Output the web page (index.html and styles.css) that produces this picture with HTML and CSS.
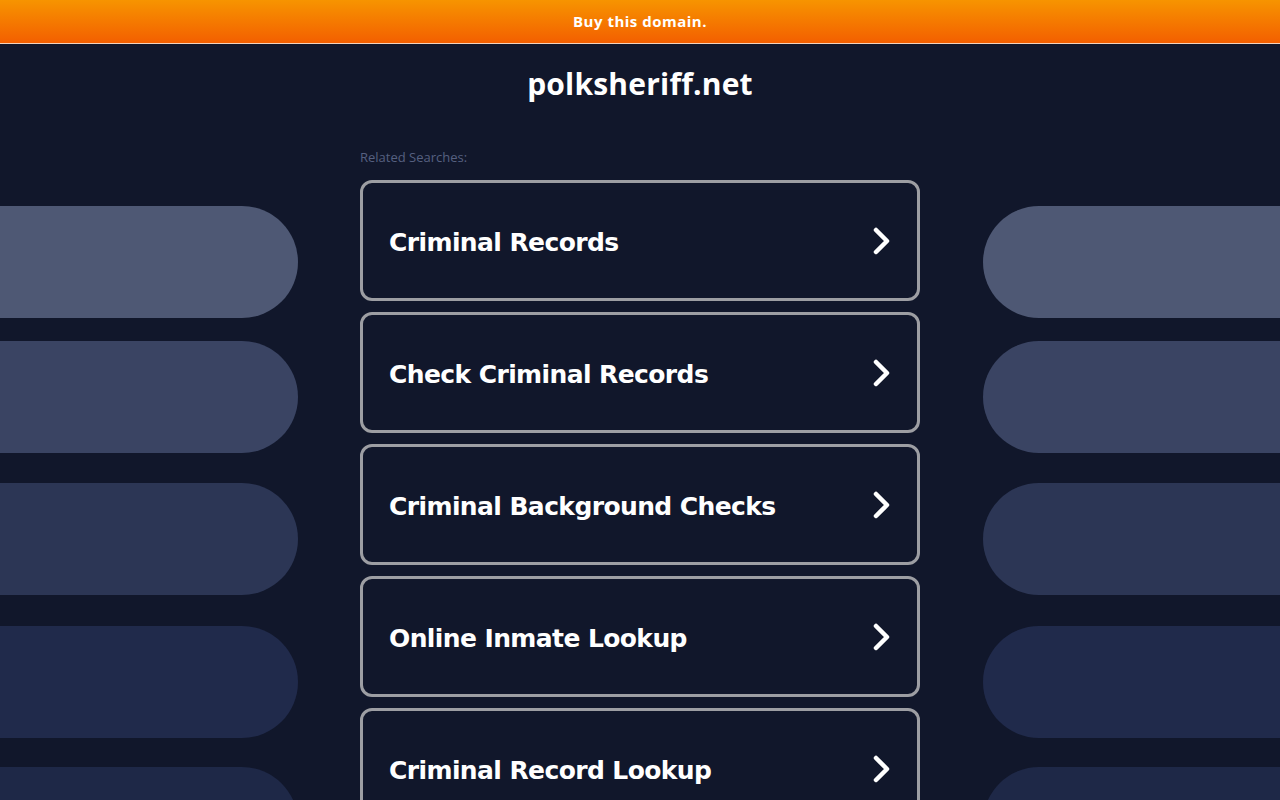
FILE: index.html
```html
<!DOCTYPE html>
<html lang="en">
<head>
<meta charset="utf-8">
<title>polksheriff.net</title>
<link rel="stylesheet" href="styles.css">
</head>
<body>
<div class="topbar"><a class="buy" href="#">Buy this domain.</a></div>
<h1 class="domain">polksheriff.net</h1>
<div class="layout">
  <div class="pills pills-left">
    <div class="pill p1"></div>
    <div class="pill p2"></div>
    <div class="pill p3"></div>
    <div class="pill p4"></div>
    <div class="pill p5"></div>
  </div>
  <main class="center">
    <div class="related">Related Searches:</div>
    <ul class="links">
      <li><a class="link" href="#"><span>Criminal Records</span><svg class="chev" viewBox="0 0 20 28" width="20" height="28"><polyline points="4,3 15,14 4,25" /></svg></a></li>
      <li><a class="link" href="#"><span>Check Criminal Records</span><svg class="chev" viewBox="0 0 20 28" width="20" height="28"><polyline points="4,3 15,14 4,25" /></svg></a></li>
      <li><a class="link" href="#"><span>Criminal Background Checks</span><svg class="chev" viewBox="0 0 20 28" width="20" height="28"><polyline points="4,3 15,14 4,25" /></svg></a></li>
      <li><a class="link" href="#"><span>Online Inmate Lookup</span><svg class="chev" viewBox="0 0 20 28" width="20" height="28"><polyline points="4,3 15,14 4,25" /></svg></a></li>
      <li><a class="link" href="#"><span>Criminal Record Lookup</span><svg class="chev" viewBox="0 0 20 28" width="20" height="28"><polyline points="4,3 15,14 4,25" /></svg></a></li>
    </ul>
  </main>
  <div class="pills pills-right">
    <div class="pill p1"></div>
    <div class="pill p2"></div>
    <div class="pill p3"></div>
    <div class="pill p4"></div>
    <div class="pill p5"></div>
  </div>
</div>
</body>
</html>
```

FILE: styles.css
```css
html, body {
  margin: 0;
  padding: 0;
  height: 800px;
  overflow: hidden;
  background: #11172b;
  font-family: "Open Sans", "Liberation Sans", sans-serif;
}

.topbar {
  height: 43px;
  border-bottom: 1px solid #f3d3bd;
  background: linear-gradient(to bottom, #f79400, #f35f00);
  display: flex;
  align-items: center;
  justify-content: center;
}

.buy {
  color: #fff;
  text-decoration: none;
  font-weight: 700;
  font-size: 15px;
  letter-spacing: 0.5px;
  margin-top: -2px;
}

.domain {
  margin: 0;
  padding-top: 21px;
  height: 53px;
  text-align: center;
  color: #fff;
  font-size: 30px;
  line-height: 38px;
  font-weight: 700;
  letter-spacing: 0.2px;
}

.layout {
  display: grid;
  grid-template-columns: 298px 560px 298px;
  justify-content: space-between;
  padding-top: 29px;
}

.pills {
  display: flex;
  flex-direction: column;
  padding-top: 59px;
}

.pill {
  height: 112px;
}

.pill + .pill { margin-top: 23px; }
.pill.p3 { margin-top: 30px; }
.pill.p4 { margin-top: 31px; }
.pill.p5 { margin-top: 29px; }

.pills-left .pill { border-radius: 0 56px 56px 0; }
.pills-right .pill { border-radius: 56px 0 0 56px; margin-left: 1px; }

.p1 { background: #4e5874; }
.p2 { background: #3a4463; }
.p3 { background: #2c3655; }
.p4 { background: #202a4b; }
.p5 { background: #1e2847; }

.related {
  color: #566080;
  font-size: 13px;
  line-height: 16px;
  height: 20px;
  padding-top: 2px;
  margin-bottom: 11px;
}

.links {
  list-style: none;
  margin: 0;
  padding: 0;
  display: flex;
  flex-direction: column;
  gap: 11px;
}

.link {
  box-sizing: border-box;
  height: 121px;
  display: flex;
  align-items: center;
  justify-content: space-between;
  padding: 3px 25px 0 26px;
  border: 3px solid #9d9ea3;
  border-radius: 12px;
  color: #fff;
  text-decoration: none;
  font-family: "DejaVu Sans", Verdana, sans-serif;
  font-weight: 700;
  font-size: 25px;
  letter-spacing: -0.6px;
}

.chev {
  fill: none;
  stroke: #fff;
  stroke-width: 4.5;
  stroke-linecap: round;
  stroke-linejoin: round;
  margin-top: -3px;
}
```
